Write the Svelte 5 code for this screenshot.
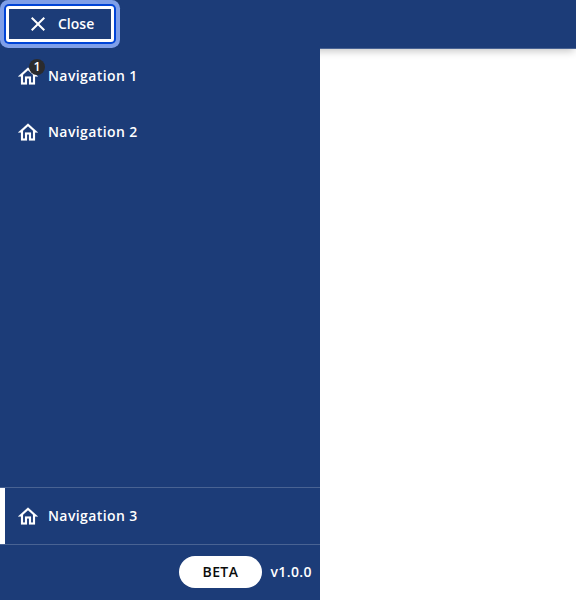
<script>
  const top = [
    { label: 'Navigation 1', badge: '1' },
    { label: 'Navigation 2' }
  ];
</script>

{#snippet home()}
  <svg class="icon heavy" viewBox="0 -0.5 24 24" aria-hidden="true">
    <path d="M12 5.69l5 4.5V18h-2v-6H9v6H7v-7.81l5-4.5M12 3L2 12h3v8h6v-6h2v6h6v-8h3L12 3z" />
  </svg>
{/snippet}

<div class="page">
  <header></header>
  <aside>
    <div class="top">
      <button>
        <svg class="icon" viewBox="0 0 24 24" aria-hidden="true">
          <path d="M19 6.41L17.59 5 12 10.59 6.41 5 5 6.41 10.59 12 5 17.59 6.41 19 12 13.41 17.59 19 19 17.59 13.41 12z" />
        </svg>
        <span>Close</span>
      </button>
    </div>
    <nav>
      {#each top as item}
        <a href="#top">
          <span class="holder">
            {@render home()}
            {#if item.badge}<span class="badge">{item.badge}</span>{/if}
          </span>
          {item.label}
        </a>
      {/each}
    </nav>
    <div class="bottom">
      <a class="selected" href="#bottom">
        <span class="holder">{@render home()}</span>
        Navigation 3
      </a>
    </div>
    <footer>
      <span class="chip">BETA</span>
      <span class="version">v1.0.0</span>
    </footer>
  </aside>
</div>

<style>
  :global(body) {
    margin: 0;
    background: #fff;
  }
  .page {
    position: relative;
    height: 600px;
    overflow: hidden;
    font: 600 14px/24px 'Open Sans', sans-serif;
    letter-spacing: 0.4px;
    color: #fff;
  }
  header {
    box-sizing: border-box;
    height: 49px;
    background: #1c3c78;
    border-bottom: 1px solid #496393;
    box-shadow: 0 4px 8px -2px rgba(0, 0, 0, 0.24);
  }
  aside {
    position: absolute;
    inset: 0 auto 0 0;
    width: 320px;
    display: flex;
    flex-direction: column;
    background: #1c3c78;
  }
  .top {
    height: 48px;
    padding: 6px;
    box-sizing: border-box;
  }
  button {
    display: flex;
    align-items: center;
    gap: 8px;
    box-sizing: border-box;
    width: 108px;
    height: 36px;
    padding: 0 0 0 17px;
    border: 3px solid #fff;
    border-radius: 3px;
    background: transparent;
    box-shadow: 0 0 0 2px #0044d7, 0 0 0 6px #7f9fe8;
    color: inherit;
    font: inherit;
    letter-spacing: 0;
  }
  .icon {
    display: block;
    width: 24px;
    height: 24px;
    fill: #fff;
  }
  .heavy {
    stroke: #fff;
    stroke-width: 0.15;
  }
  nav {
    flex: 1;
  }
  a {
    display: flex;
    align-items: center;
    gap: 8px;
    height: 56px;
    padding-left: 16px;
    box-sizing: border-box;
    color: #fff;
    text-decoration: none;
  }
  .holder {
    position: relative;
  }
  .badge {
    position: absolute;
    left: 13px;
    top: -5px;
    width: 16px;
    height: 16px;
    border-radius: 50%;
    background: #2b2b2d;
    font-size: 12.5px;
    font-weight: 600;
    line-height: 16px;
    letter-spacing: 0;
    text-align: center;
  }
  .bottom {
    border-top: 1px solid #496393;
    border-bottom: 1px solid #496393;
  }
  .selected {
    border-left: 5px solid #fff;
    padding-left: 11px;
  }
  footer {
    display: flex;
    align-items: center;
    justify-content: flex-end;
    gap: 8px;
    height: 55px;
    padding: 0 8px 1px 0;
    box-sizing: border-box;
  }
  .chip {
    width: 83px;
    height: 32px;
    padding-right: 1px;
    box-sizing: border-box;
    border-radius: 16px;
    background: #fff;
    color: #0b0c0c;
    line-height: 32px;
    text-align: center;
  }
</style>
